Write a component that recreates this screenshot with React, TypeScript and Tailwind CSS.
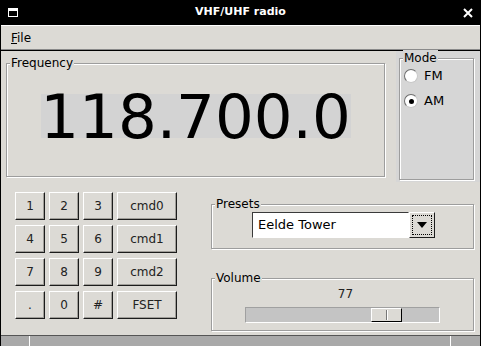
import type { ReactNode } from "react";

const font = "font-['DejaVu_Sans',sans-serif]";

function GroupBox({
  label,
  className,
  children,
}: {
  label: string;
  className: string;
  children?: ReactNode;
}) {
  return (
    <div
      className={`relative border border-[#9d9d9d] shadow-[inset_1px_1px_0_#fff,1px_1px_0_#fff] ${className}`}
    >
      <span className="absolute -top-[9px] left-[3px] bg-inherit px-[1px] text-[12px] leading-[16px] text-black">
        {label}
      </span>
      {children}
    </div>
  );
}

function KeyButton({ label, wide }: { label: string; wide?: boolean }) {
  return (
    <div
      className={`flex h-[28px] items-center justify-center border border-t-white border-l-white border-b-[#1c1c1c] border-r-[#1c1c1c] bg-[#dcdad5] text-[12px] text-[#222] shadow-[inset_-1px_-1px_0_#a09e99] ${
        wide ? "w-[60px]" : "w-[30px]"
      }`}
    >
      {label}
    </div>
  );
}

function Radio({ label, checked }: { label: string; checked?: boolean }) {
  return (
    <div className="flex h-[14px] items-center gap-[6px]">
      <div className="flex h-[14px] w-[14px] items-center justify-center rounded-full border border-[#6e6e6e] border-b-[#c8c8c8] border-r-[#c8c8c8] bg-white">
        {checked && <div className="h-[5px] w-[5px] rounded-full bg-black" />}
      </div>
      <span className="text-[13px] text-black">{label}</span>
    </div>
  );
}

export default function App() {
  const keys = [
    ["1", "2", "3", "cmd0"],
    ["4", "5", "6", "cmd1"],
    ["7", "8", "9", "cmd2"],
    [".", "0", "#", "FSET"],
  ];

  return (
    <div className={`flex h-[346px] w-[481px] flex-col bg-black ${font}`}>
      {/* title bar */}
      <div className="flex h-[25px] items-center justify-between px-[8px] text-white">
        <div className="h-[9px] w-[10px] border border-t-[3px] border-white" />
        <span className="text-[11px] font-bold">VHF/UHF radio</span>
        <svg width="10" height="10" viewBox="0 0 10 10">
          <path d="M1 1 L9 9 M9 1 L1 9" stroke="white" strokeWidth="2" />
        </svg>
      </div>

      <div className="flex flex-1 flex-col px-[1px]">
        {/* menu bar */}
        <div className="flex h-[25px] items-center border-t border-t-white border-b border-b-[#8a8a8a] bg-[#dcdad5] px-[10px] text-[12px] text-black">
          <span>
            <span className="underline">F</span>ile
          </span>
        </div>

        <div className="flex flex-1 flex-col border-t border-black bg-[#dcdad5]">
          {/* top row */}
          <div className="flex h-[131px]">
            <div className="w-[395px] pl-[5px] pt-[12px]">
              <GroupBox label="Frequency" className="h-[114px] w-[379px] bg-[#dcdad5]">
                <div className="flex justify-center pt-[30px]">
                  <div className="flex h-[44px] w-[310px] items-center justify-center bg-[#d3d3d3] text-[61px] leading-none text-black">
                    118.700.0
                  </div>
                </div>
              </GroupBox>
            </div>
            <div className="flex-1 bg-[#d6d6d6] pl-[3px] pr-[5px] pt-[7px]">
              <GroupBox label="Mode" className="h-[122px] w-[75px] bg-[#d6d6d6]">
                <div className="flex flex-col gap-[11px] pl-[4px] pt-[10px]">
                  <Radio label="FM" />
                  <Radio label="AM" checked />
                </div>
              </GroupBox>
            </div>
          </div>

          {/* bottom row */}
          <div className="flex flex-1">
            <div className="flex w-[195px] flex-col gap-[5px] pl-[14px] pt-[10px]">
              {keys.map((row, i) => (
                <div key={i} className="flex gap-[4px]">
                  {row.map((k) => (
                    <KeyButton key={k} label={k} wide={k.length > 1} />
                  ))}
                </div>
              ))}
            </div>
            <div className="flex flex-col pl-[15px] pt-[22px]">
              <GroupBox label="Presets" className="h-[45px] w-[263px] bg-[#dcdad5]">
                <div className="flex justify-center pl-[2px] pt-[7px]">
                  <div className="flex h-[26px] w-[157px] items-center border border-[#3a3a3a] border-b-white border-r-white bg-white pl-[5px] text-[13px] text-black">
                    Eelde Tower
                  </div>
                  <div className="flex h-[26px] w-[26px] items-center justify-center border border-t-white border-l-white border-b-[#1c1c1c] border-r-[#1c1c1c] bg-[#dcdad5]">
                    <div className="flex h-[20px] w-[20px] items-center justify-center border border-dotted border-black">
                      <svg width="10" height="6" viewBox="0 0 10 6">
                        <path d="M0 0 H10 L5 6 Z" fill="black" />
                      </svg>
                    </div>
                  </div>
                </div>
              </GroupBox>
              <GroupBox label="Volume" className="mt-[29px] h-[53px] w-[263px] bg-[#dcdad5]">
                <div className="flex flex-col items-center pt-[8px]">
                  <span className="ml-[6px] text-[12px] leading-[14px] text-[#222]">77</span>
                  <div className="mt-[6px] flex h-[16px] w-[195px] items-stretch border border-[#a0a0a0] border-b-white border-r-white bg-[#c4c4c4] pl-[125px]">
                    <div className="flex w-[31px] items-center justify-center border border-t-white border-l-white border-b-black border-r-black bg-[#dcdad5]">
                      <div className="h-[10px] w-[2px] border-l border-[#777] border-r border-r-white" />
                    </div>
                  </div>
                </div>
              </GroupBox>
            </div>
          </div>

          {/* status strip */}
          <div className="flex h-[11px] border-t border-[#555] bg-[#a9a9a9]">
            <div className="w-[29px] border-r border-r-white" />
            <div className="w-[421px] border-r border-r-white" />
            <div className="flex-1" />
          </div>
        </div>
      </div>
    </div>
  );
}
